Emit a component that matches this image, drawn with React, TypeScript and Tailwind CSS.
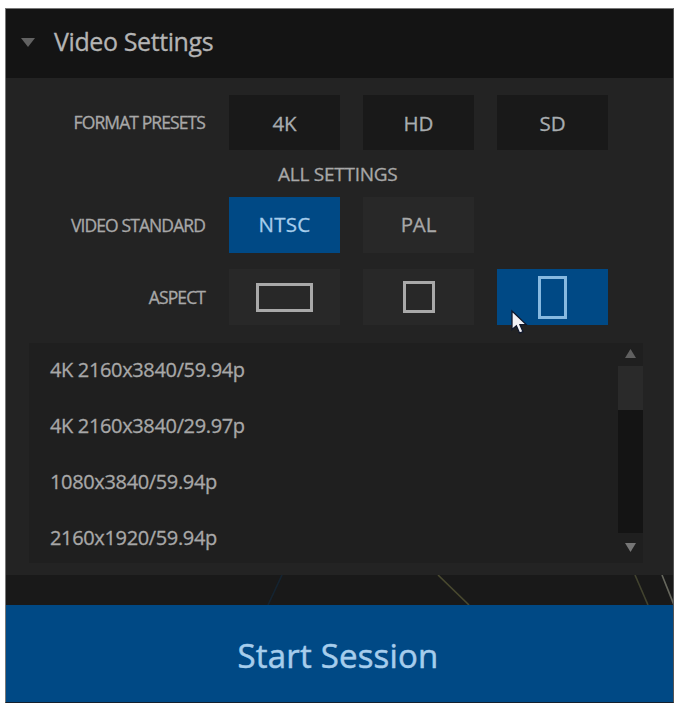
import React, {ReactNode, useState} from 'react'
import clsx from 'clsx'

const presets = ['4K', 'HD', 'SD']

const standards = [
    {name: 'NTSC', tracking: 'tracking-[0.3px]'},
    {name: 'PAL', tracking: 'tracking-[-0.1px]'},
]

const aspects = [
    {name: 'wide', box: 'h-[29px] w-[57px] border-[#a9a9a9]'},
    {name: 'square', box: 'h-8 w-8 border-[#a9a9a9]'},
    {name: 'tall', box: 'h-[43px] w-[29px] border-[#86b9e0]'},
]

const formats = [
    '4K 2160x3840/59.94p',
    '4K 2160x3840/29.97p',
    '1080x3840/59.94p',
    '2160x1920/59.94p',
]

function Label({children}: {children: ReactNode}) {
    return (
        <div className="w-[199px] shrink-0 whitespace-nowrap text-right text-[17.5px] tracking-[-0.9px] text-[#a8a8a8]">
            {children}
        </div>
    )
}

type OptionProps = {
    children: ReactNode
    label: string
    className: string
    onClick?: () => void
}

function Option({children, label, className, onClick}: OptionProps) {
    return (
        <button
            type="button"
            aria-label={label}
            onClick={onClick}
            className={clsx('relative flex w-[111px] items-center justify-center text-[20.5px]', className)}
        >
            {children}
        </button>
    )
}

function Cursor() {
    return (
        <svg className="absolute left-[13px] top-[40px] h-[28px] w-[19px]" viewBox="0 0 19 28">
            <path
                d="M2 2 L2 20.5 L6.4 16.8 L9.6 24.2 L13 22.7 L9.9 15.6 L16 15.4 Z"
                fill="#f1f1f5"
                stroke="#10182c"
                strokeWidth="1.3"
            />
        </svg>
    )
}

export default function App() {
    const [standard, setStandard] = useState('NTSC')
    const [aspect, setAspect] = useState('tall')

    return (
        <div className="h-[704px] w-[676px] overflow-hidden bg-white pl-[5px] pt-2 font-['Open_Sans','Noto_Sans',sans-serif] [-webkit-text-stroke:0.3px]">
            <div className="flex h-[695px] w-[669px] flex-col border border-[#777] border-b-[#16202c] border-r-[#555] bg-[#232323]">
                <header className="flex h-[69px] shrink-0 items-center bg-[#141414] pb-[3px] pl-[15px]">
                    <svg className="h-[9px] w-[14px]" viewBox="0 0 14 9">
                        <path d="M0 0H14L7 9Z" fill="#626262" />
                    </svg>
                    <h1 className="ml-[19px] whitespace-nowrap text-[25px] tracking-[-0.4px] text-[#b4b4b4]">Video Settings</h1>
                </header>

                <section className="flex h-[497px] shrink-0 flex-col">
                    <div className="mt-[17px] flex h-[55px] items-center">
                        <Label>FORMAT PRESETS</Label>
                        <div className="ml-6 flex h-full gap-[23px]">
                            {presets.map((name) => (
                                <Option key={name} label={name} className="bg-[#191919] pt-[2px] tracking-[-0.1px] text-[#a8adb0]">
                                    {name}
                                </Option>
                            ))}
                        </div>
                    </div>

                    <h2 className="flex h-[47px] items-center whitespace-nowrap pl-[272px] pt-[2px] text-[19px] tracking-[-0.25px] text-[#a8a8a8]">
                        ALL SETTINGS
                    </h2>

                    <div className="flex h-[56px] items-center">
                        <Label>VIDEO STANDARD</Label>
                        <div className="ml-6 flex h-full gap-[23px]">
                            {standards.map((item) => (
                                <Option
                                    key={item.name}
                                    label={item.name}
                                    onClick={() => setStandard(item.name)}
                                    className={clsx('pb-[2px]', item.tracking, standard === item.name ? 'bg-[#004985] text-[#a6cdec]' : 'bg-[#282828] text-[#a8a8a8]')}
                                >
                                    {item.name}
                                </Option>
                            ))}
                        </div>
                    </div>

                    <div className="mt-4 flex h-[56px] items-center">
                        <Label>ASPECT</Label>
                        <div className="ml-6 flex h-full gap-[23px]">
                            {aspects.map((item) => (
                                <Option
                                    key={item.name}
                                    label={item.name}
                                    onClick={() => setAspect(item.name)}
                                    className={aspect === item.name ? 'bg-[#004985]' : 'bg-[#282828]'}
                                >
                                    <span className={clsx('border-[3px]', item.box)} />
                                    {item.name === 'tall' && <Cursor />}
                                </Option>
                            ))}
                        </div>
                    </div>

                    <div className="ml-[23px] mt-[18px] flex h-[220px] w-[614px] bg-[#1f1f1f]">
                        <ul className="-mt-px flex-1 pl-[21px] text-[20px] tracking-[-0.35px] text-[#a8a8a8]">
                            {formats.map((format) => (
                                <li key={format} className="flex h-[56px] items-center whitespace-nowrap">{format}</li>
                            ))}
                        </ul>
                        <div className="flex w-[26px] flex-col items-center">
                            <svg className="mt-[6px] h-[9px] w-[11px] shrink-0" viewBox="0 0 12 9" preserveAspectRatio="none">
                                <path d="M0 9H12L6 0Z" fill="#606060" />
                            </svg>
                            <div className="mt-[8px] h-[167px] w-[25px] bg-[#141414]">
                                <div className="h-[44px] bg-[#2a2a2a]" />
                            </div>
                            <svg className="mt-[10px] h-[9px] w-[11px] shrink-0" viewBox="0 0 12 9" preserveAspectRatio="none">
                                <path d="M0 0H12L6 9Z" fill="#767676" />
                            </svg>
                        </div>
                    </div>
                </section>

                {/* bit of the scene that shows between the panel and the button */}
                <div className="h-[30px] shrink-0 bg-[#191919]">
                    <svg className="h-[30px] w-full" viewBox="6 575 667 30" preserveAspectRatio="none" fill="none" strokeWidth="1.6">
                        <path d="M282 575L268 605" stroke="#152431" />
                        <path d="M438 575L469 605" stroke="#49492f" />
                        <path d="M635 575L648 605" stroke="#42432f" />
                        <path d="M662 575L674 605" stroke="#66675d" />
                    </svg>
                </div>

                <button type="button" className="w-full flex-1 whitespace-nowrap bg-[#004985] pr-[3px] pt-[5px] text-[33px] tracking-[0.2px] text-[#a6cdec] [-webkit-text-stroke:0.5px]">
                    Start Session
                </button>
            </div>
        </div>
    )
}
